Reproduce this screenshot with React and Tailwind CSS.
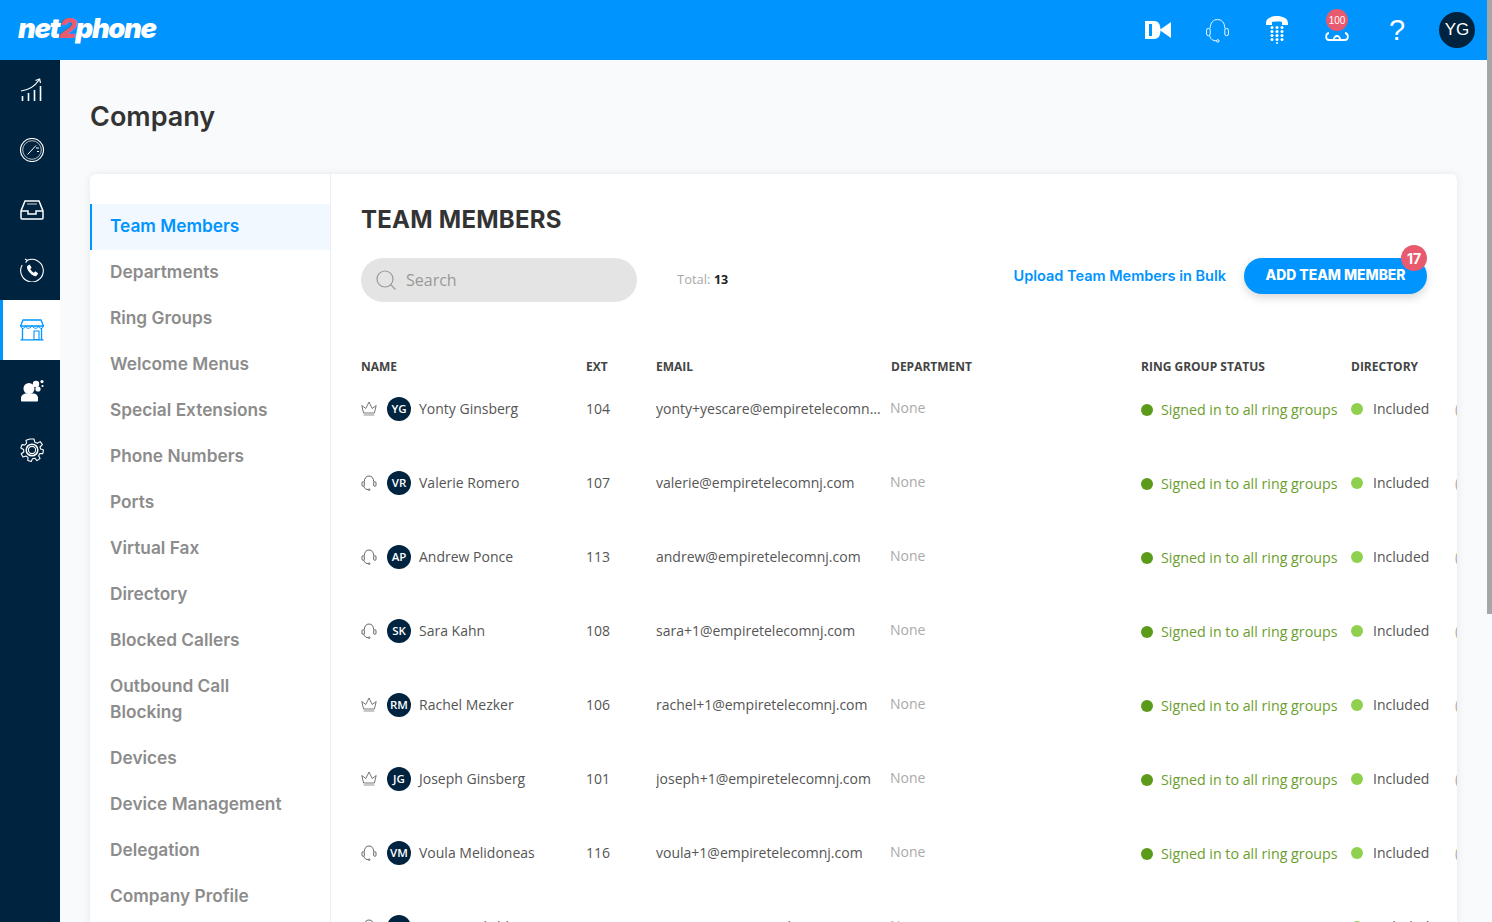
import { Search } from "lucide-react";

const menu = [
  "Team Members",
  "Departments",
  "Ring Groups",
  "Welcome Menus",
  "Special Extensions",
  "Phone Numbers",
  "Ports",
  "Virtual Fax",
  "Directory",
  "Blocked Callers",
  "Outbound Call Blocking",
  "Devices",
  "Device Management",
  "Delegation",
  "Company Profile",
];

const members = [
  { icon: "crown", initials: "YG", name: "Yonty Ginsberg", ext: "104", email: "yonty+yescare@empiretelecomnj.com" },
  { icon: "headset", initials: "VR", name: "Valerie Romero", ext: "107", email: "valerie@empiretelecomnj.com" },
  { icon: "headset", initials: "AP", name: "Andrew Ponce", ext: "113", email: "andrew@empiretelecomnj.com" },
  { icon: "headset", initials: "SK", name: "Sara Kahn", ext: "108", email: "sara+1@empiretelecomnj.com" },
  { icon: "crown", initials: "RM", name: "Rachel Mezker", ext: "106", email: "rachel+1@empiretelecomnj.com" },
  { icon: "crown", initials: "JG", name: "Joseph Ginsberg", ext: "101", email: "joseph+1@empiretelecomnj.com" },
  { icon: "headset", initials: "VM", name: "Voula Melidoneas", ext: "116", email: "voula+1@empiretelecomnj.com" },
  { icon: "headset", initials: "ML", name: "Martin Lichtblau", ext: "110", email: "martin+1@empiretelecomnj.com" },
];

const Headset = ({ className, width = 1 }) => (
  <svg viewBox="0 0 24 24" fill="none" stroke="currentColor" strokeWidth={width} className={className}>
    <path d="M5 10 C5 4.5 8 1.5 12 1.5 S19 4.5 19 10" />
    <rect x="1.5" y="10" width="3.5" height="7" rx="1.7" />
    <rect x="19" y="10" width="3.5" height="7" rx="1.7" />
    <path d="M4.5 17 C5 20.5 8 22 11 22" />
    <circle cx="12.3" cy="22" r="1.2" />
  </svg>
);

const Crown = () => (
  <svg viewBox="0 0 16 16" fill="none" stroke="#666" strokeWidth="0.9" className="h-4 w-4">
    <path d="M2.6 12 L0.8 4.5 L4.8 7.5 L8 1 L11.2 7.5 L15.2 4.5 L13.4 12 Z" strokeLinejoin="round" />
    <path d="M2.6 14 H13.4" stroke="#bbb" strokeWidth="1.6" />
  </svg>
);

const Video = () => (
  <svg viewBox="0 0 27 18" fill="white" className="ml-[2px] h-[18px] w-[27px]">
    <path fillRule="evenodd" d="M0 0 H9 C14 0 15.5 4 15.5 9 S14 18 9 18 H0 Z M4 3 V15 H7 V3 Z" />
    <path d="M14.5 9 L26 1 V17 Z" />
  </svg>
);

const DeskPhone = () => (
  <svg viewBox="0 0 22 28" fill="white" className="h-7 w-[22px]">
    <path d="M0 7 C0 2 6 0 11 0 S22 2 22 7 V9 H16 V6 C14 5.2 8 5.2 6 6 V9 H0 Z" />
    {[11.5, 15.5, 19.5, 23.5].map((y) =>
      [6, 11, 16].map((x) => <circle key={`${x}-${y}`} cx={x} cy={y} r="1.5" />)
    )}
    <circle cx="11" cy="27" r="1" />
  </svg>
);

const Cloud = () => (
  <svg viewBox="0 0 24 9" fill="none" stroke="white" strokeWidth="1.8" className="h-[9px] w-6">
    <path d="M4 1 C0.2 1.6 0.2 7.8 4 8 H20 C23.8 7.8 23.8 1.6 20 1" />
    <path d="M8.5 8 C9 6 10.5 4 12 4 C13.5 4 15 6 15.5 8" />
  </svg>
);

const sideIcons = [
  <svg key="a" viewBox="0 0 24 24" fill="none" stroke="white" strokeWidth="1.2" className="h-6 w-6">
    <path d="M2.5 23 V18 M8.5 23 V15 M14.5 23 V12 M20.5 23 V8" strokeWidth="1.6" />
    <path d="M1 13 C9 12 15 8 19 2" />
    <path d="M15.5 2.5 L19.6 1 L20.5 5" />
  </svg>,
  <svg key="b" viewBox="0 0 24 24" fill="none" stroke="white" strokeWidth="1" className="h-6 w-6">
    <circle cx="12" cy="12" r="11.5" strokeWidth="1.2" />
    <circle cx="12" cy="12" r="9.3" strokeWidth="0.7" />
    <path d="M9 15 L16 7.5 M7.5 16.5 L9 15 M16 10 H19 M17 13.5 H19" />
  </svg>,
  <svg key="c" viewBox="0 0 24 20" fill="none" stroke="white" strokeWidth="1.5" className="h-5 w-6">
    <path d="M5 1 H19 L23 11 V18 C23 18.6 22.6 19 22 19 H2 C1.4 19 1 18.6 1 18 V11 Z" />
    <path d="M1 11 H8 V14 H16 V11 H23" />
    <path d="M7 4 H17" strokeWidth="0.8" />
  </svg>,
  <svg key="d" viewBox="0 0 24 24" fill="none" stroke="white" strokeWidth="1.1" className="h-6 w-6">
    <path d="M7 2.5 A11.3 11.3 0 1 1 2.2 7" />
    <path d="M5 1 L7.3 2.5 L5.6 4.6" />
    <path
      fill="white"
      stroke="none"
      d="M7.3 8 L9.6 6.4 L11.6 9.4 L10.3 11 C11 12.5 12.4 14 13.8 14.7 L15.4 13.3 L18.2 15.6 L16.6 17.8 C15.6 18.8 12.6 17.8 10 15 C7.4 12.4 6.4 9.4 7.3 8 Z"
    />
  </svg>,
  <svg key="e" viewBox="0 0 24 22" fill="none" stroke="#0094ff" strokeWidth="1.3" className="h-[22px] w-6">
    <path d="M3 1 H21 L23.5 7 H0.5 Z" />
    <path d="M0.5 7 C1 10 5 10 5.5 7 C6 10 10 10 12 7 C14 10 18 10 18.5 7 C19 10 23 10 23.5 7" strokeWidth="1" />
    <path d="M2.5 9 V20.5 M21.5 9 V20.5 M0.5 20.8 H23.5" />
    <path d="M14 12 H19 V20.5 H14 Z" strokeWidth="1.1" />
  </svg>,
  <svg key="f" viewBox="0 0 24 23" fill="white" className="h-[23px] w-6">
    <circle cx="9" cy="9.5" r="5.5" />
    <circle cx="16" cy="5" r="3.2" />
    <circle cx="18" cy="10" r="2.6" />
    <circle cx="22" cy="2.6" r="1.6" />
    <circle cx="22.5" cy="7" r="1.1" />
    <path d="M1 19 C1 16 4 14.5 6 14.5 H13 C16 14.5 18 16.5 18 19 V21.5 C18 22 17.6 22.5 17 22.5 H2 C1.4 22.5 1 22 1 21.5 Z" />
  </svg>,
  <svg key="g" viewBox="0 0 24 24" fill="none" stroke="white" strokeWidth="1.1" className="h-6 w-6">
    <path d="M10 1 H14 L14.8 4.2 L17.3 5.3 L20.2 3.6 L22.4 6.6 L20 9 L20.7 11 L23.5 12 L22.8 15.6 L19.8 15.6 L18.6 17.8 L20 20.6 L17 22.6 L14.8 20.2 L12.5 20.8 L11.2 23.5 L7.8 22.4 L8 19.4 L6 18 L3 19 L1.2 15.8 L3.8 14 L3.6 11.6 L0.8 10 L2 6.6 L5 7 L6.6 5.2 L6 2.2 Z" strokeLinejoin="round" />
    <circle cx="12" cy="12" r="5.8" strokeWidth="1.5" />
    <circle cx="12" cy="12" r="3.6" />
  </svg>,
];

const heading = { fontFamily: "Inter, sans-serif" };

const App = () => {
  return (
    <div className="relative flex h-[922px] flex-col overflow-hidden bg-[#f9fafc] font-['Open_Sans',sans-serif]">
      <header className="flex h-[60px] shrink-0 items-center justify-between bg-[#0094ff] pl-[18px] pr-[17px]">
        <div style={heading} className="mt-[-2px] text-[27.4px] font-black italic leading-none tracking-[-1.35px] text-white">
          net<span className="text-[#e85a6e]">2</span>phone
        </div>
        <div className="flex items-center">
          <div className="flex w-[60px] justify-center"><Video /></div>
          <div className="flex w-[60px] justify-center text-white"><Headset className="h-[25px] w-[25px]" width={0.9} /></div>
          <div className="flex w-[60px] justify-center"><DeskPhone /></div>
          <div className="relative flex h-10 w-[60px] items-end justify-center pb-[4px]">
            <span className="mb-[5px]"><Cloud /></span>
            <span className="absolute left-[19px] top-[-1px] flex h-[22px] w-[22px] items-center justify-center rounded-full bg-[#e85a6e] font-['Liberation_Sans',sans-serif] text-[10px] text-white">100</span>
          </div>
          <div className="flex w-[60px] justify-center font-['Liberation_Sans',sans-serif] text-[29px] leading-none text-white">?</div>
          <div className="ml-[12px] flex h-9 w-9 items-center justify-center rounded-full bg-[#00233f] font-['Liberation_Sans',sans-serif] text-[17px] text-white">YG</div>
        </div>
      </header>

      <div className="flex min-h-0 flex-1">
        <nav className="w-[60px] shrink-0 bg-[#00233f]">
          {sideIcons.map((icon, i) => (
            <div
              key={i}
              className={`flex h-[60px] items-center justify-center ${i === 4 ? "border-l-[3px] border-[#0094ff] bg-white" : "pl-1"}`}
            >
              {icon}
            </div>
          ))}
        </nav>

        <main className="min-w-0 flex-1 pl-[30px] pr-[35px]">
          <h1 style={heading} className="mt-[40px] h-[74px] text-[27px] font-semibold leading-[34px] text-[#333]">Company</h1>

          <div className="flex h-[800px] overflow-hidden rounded-md bg-white shadow-[0_0_8px_rgba(0,0,0,0.08)]">
            <aside className="w-[241px] shrink-0 border-r border-[#eceef1] pt-[30px]">
              {menu.map((item, i) => (
                <div
                  key={item}
                  style={heading}
                  className={`pb-[11px] pr-9 pt-[9px] text-[17.3px] font-semibold leading-[26px] ${
                    i === 0
                      ? "border-l-2 border-[#0094ff] bg-[#f2f8ff] pl-[18px] text-[#0094ff]"
                      : "pl-5 text-[#8c8c8c]"
                  }`}
                >
                  {item}
                </div>
              ))}
            </aside>

            <section className="min-w-0 flex-1 overflow-hidden pl-[30px]">
              <h2 style={heading} className="mt-[31px] h-[53px] text-[24px] font-bold leading-[30px] tracking-[0.25px] text-[#333]">TEAM MEMBERS</h2>

              <div className="flex h-11 items-center pr-[30px]">
                <div className="flex h-11 w-[276px] items-center rounded-full bg-[#e4e4e4] pl-[13px] text-[#999]">
                  <Search className="h-6 w-6" strokeWidth={1.2} />
                  <span className="ml-2 text-base">Search</span>
                </div>
                <div className="ml-10 text-[13px] text-[#aaa]">
                  Total: <span className="text-[12.5px] font-bold text-[#222]">13</span>
                </div>
                <a style={heading} className="ml-auto mt-[-8px] text-[14.5px] font-semibold text-[#0094ff]">Upload Team Members in Bulk</a>
                <div className="relative ml-[18px] mt-[-8px]">
                  <button style={heading} className="h-9 w-[183px] rounded-full bg-[#0094ff] pb-[2px] text-[13.9px] font-extrabold text-white shadow-[0_4px_8px_rgba(0,0,0,0.15)]">ADD TEAM MEMBER</button>
                  <span style={heading} className="absolute right-0 top-[-13px] flex h-[26px] w-[26px] items-center justify-center rounded-full bg-[#e85a6e] text-[14px] font-bold text-white">17</span>
                </div>
              </div>

              <div className="mt-[57px] grid grid-cols-[225px_70px_235px_250px_210px_104px_20px] text-xs font-bold leading-[16px] text-[#444]">
                <div>NAME</div>
                <div>EXT</div>
                <div>EMAIL</div>
                <div>DEPARTMENT</div>
                <div>RING GROUP STATUS</div>
                <div>DIRECTORY</div>
              </div>

              <div className="mt-[18px]">
                {members.map((m) => (
                  <div key={m.initials} className="grid h-[74px] grid-cols-[225px_70px_234px_251px_210px_104px_20px] items-start pt-[4px] text-sm leading-6 text-[#555]">
                    <div className="flex items-center">
                      {m.icon === "crown" ? <Crown /> : <Headset className="h-4 w-4 text-[#666]" width={1.5} />}
                      <span className="ml-[10px] flex h-6 w-6 items-center justify-center rounded-full bg-[#00233f] pb-px text-[11.5px] font-semibold text-white">{m.initials}</span>
                      <span className="ml-2">{m.name}</span>
                    </div>
                    <div>{m.ext}</div>
                    <div className="truncate pr-[9px]">{m.email}</div>
                    <div className="mt-[-1px] text-[#aaa]">None</div>
                    <div className="mt-px flex items-center whitespace-nowrap text-[14.25px] text-[#6b9e2e]">
                      <span className="mr-2 h-3 w-3 rounded-full bg-[#5c9a1a]" />
                      Signed in to all ring groups
                    </div>
                    <div className="flex items-center whitespace-nowrap">
                      <span className="mr-[10px] h-3 w-3 rounded-full bg-[#8fd14f]" />
                      Included
                    </div>
                    <div className="text-[#aaa]">(</div>
                  </div>
                ))}
              </div>
            </section>
          </div>
        </main>
      </div>

      {/* scrollbar thumb sits over the page */}
      <div className="absolute right-0 top-0 h-[614px] w-[5px] bg-[#a6a6a6]" />
    </div>
  );
};

export default App;
